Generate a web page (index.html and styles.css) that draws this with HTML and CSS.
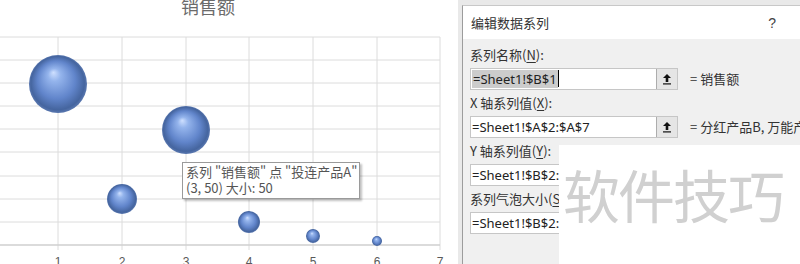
FILE: index.html
```html
<!DOCTYPE html>
<html lang="zh-CN">

<head>
    <meta charset="UTF-8">
    <meta name="viewport" content="width=device-width, initial-scale=1.0">
    <title>编辑数据系列</title>
    <link rel="stylesheet" href="styles.css">
</head>

<body>
    <div class="screen">
        <!-- 气泡图 -->
        <div class="chart">
            <svg class="plot" width="450" height="264" viewBox="0 0 450 264">
                <defs>
                    <radialGradient id="ball" cx="50%" cy="50%" r="50%" fx="42%" fy="30%">
                        <stop offset="0%" stop-color="#cfe0ff" />
                        <stop offset="22%" stop-color="#94b4ec" />
                        <stop offset="65%" stop-color="#6185cb" />
                        <stop offset="92%" stop-color="#45659f" />
                        <stop offset="100%" stop-color="#5a78b0" />
                    </radialGradient>
                </defs>
                <text class="title" x="208" y="14" text-anchor="middle">销售额</text>
                <g class="grid">
                    <line x1="0" y1="37" x2="440" y2="37" />
                    <line x1="0" y1="60" x2="440" y2="60" />
                    <line x1="0" y1="83" x2="440" y2="83" />
                    <line x1="0" y1="106" x2="440" y2="106" />
                    <line x1="0" y1="129" x2="440" y2="129" />
                    <line x1="0" y1="152" x2="440" y2="152" />
                    <line x1="0" y1="176" x2="440" y2="176" />
                    <line x1="0" y1="199" x2="440" y2="199" />
                    <line x1="0" y1="222" x2="440" y2="222" />
                    <line x1="58" y1="37" x2="58" y2="250" />
                    <line x1="122" y1="37" x2="122" y2="250" />
                    <line x1="186" y1="37" x2="186" y2="250" />
                    <line x1="249" y1="37" x2="249" y2="250" />
                    <line x1="313" y1="37" x2="313" y2="250" />
                    <line x1="377" y1="37" x2="377" y2="250" />
                    <line x1="440" y1="37" x2="440" y2="250" />
                </g>
                <line class="axis" x1="0" y1="245" x2="440" y2="245" />
                <g class="bubbles">
                    <circle cx="58" cy="84" r="29" />
                    <circle cx="186" cy="130" r="24" />
                    <circle cx="122" cy="199" r="15" />
                    <circle cx="249" cy="222" r="11" />
                    <circle cx="313" cy="236" r="7" />
                    <circle cx="377" cy="241" r="5" />
                </g>
                <g class="ticks">
                    <text x="58" y="266">1</text>
                    <text x="122" y="266">2</text>
                    <text x="186" y="266">3</text>
                    <text x="249" y="266">4</text>
                    <text x="313" y="266">5</text>
                    <text x="377" y="266">6</text>
                    <text x="440" y="266">7</text>
                </g>
            </svg>
            <div class="tooltip">
                <div>系列 "销售额" 点 "投连产品A"</div>
                <div>(3, 50) 大小: 50</div>
            </div>
        </div>

        <div class="gap"></div>

        <!-- 编辑数据系列 对话框 -->
        <div class="dialog">
            <div class="dlg-title">
                <span>编辑数据系列</span>
                <span class="help">?</span>
            </div>
            <div class="dlg-body">
                <div class="label">系列名称(<u>N</u>):</div>
                <div class="row">
                    <div class="ref">
                        <span class="ref-text"><span class="sel">=Sheet1!$B$1</span><span class="caret"></span></span>
                        <span class="pick"><svg width="10" height="12" viewBox="0 0 10 12"><path d="M5 1 L9 5 H6.3 V9 H3.7 V5 H1 Z" fill="#111" /><rect x="1" y="10.3" width="8" height="1.2" fill="#111" /></svg></span>
                    </div>
                    <div class="value">= 销售额</div>
                </div>
                <div class="label">X 轴系列值(<u>X</u>):</div>
                <div class="row">
                    <div class="ref">
                        <span class="ref-text">=Sheet1!$A$2:$A$7</span>
                        <span class="pick"><svg width="10" height="12" viewBox="0 0 10 12"><path d="M5 1 L9 5 H6.3 V9 H3.7 V5 H1 Z" fill="#111" /><rect x="1" y="10.3" width="8" height="1.2" fill="#111" /></svg></span>
                    </div>
                    <div class="value">= 分红产品B, 万能产品C, 投连产品A</div>
                </div>
                <div class="label">Y 轴系列值(<u>Y</u>):</div>
                <div class="row">
                    <div class="ref">
                        <span class="ref-text">=Sheet1!$B$2:$B$7</span>
                    </div>
                </div>
                <div class="label">系列气泡大小(<u>S</u>):</div>
                <div class="row">
                    <div class="ref">
                        <span class="ref-text">=Sheet1!$B$2:$B$7</span>
                    </div>
                </div>
            </div>
        </div>

        <div class="watermark">软件技巧</div>
    </div>
</body>

</html>
```

FILE: styles.css
```css
body {
    margin: 0;
    padding: 0;
    background-color: #ffffff;
    font-family: "Noto Sans CJK SC", "Noto Sans", sans-serif;
    color: #333;
}

.screen {
    position: relative;
    display: flex;
    width: 800px;
    height: 264px;
    overflow: hidden;
}

/* 图表 */
.chart {
    position: relative;
    width: 450px;
    height: 264px;
    flex-shrink: 0;
}

.plot {
    display: block;
}

.title {
    font-family: "Noto Sans CJK SC", sans-serif;
    font-size: 18px;
    fill: #6b6b6b;
}

.grid line {
    stroke: #dcdcdc;
    stroke-width: 1;
}

.axis {
    stroke: #cfcfcf;
    stroke-width: 1.5;
}

.bubbles circle {
    fill: url(#ball);
}

.ticks text {
    font-family: "Liberation Sans", sans-serif;
    font-size: 12px;
    fill: #595959;
    text-anchor: middle;
}

.tooltip {
    position: absolute;
    left: 182px;
    top: 162px;
    width: 170px;
    padding: 1px 3px 2px 3px;
    background-color: #ffffff;
    border: 1px solid #9a9a9a;
    box-shadow: 2px 2px 2px rgba(0, 0, 0, 0.25);
    font-size: 13px;
    line-height: 16px;
    color: #555;
    white-space: nowrap;
}

/* 分隔条 */
.gap {
    width: 8px;
    flex-shrink: 0;
    background-color: #ffffff;
    border-right: 4px solid #e9e9e9;
}

/* 对话框 */
.dialog {
    width: 337px;
    flex-shrink: 0;
    margin-top: 5px;
    background-color: #f0f0f0;
    border-left: 1px solid #9c9c9c;
    border-top: 1px solid #c8c8c8;
    box-shadow: 0 -5px 0 #e9e9e9;
}

.dlg-title {
    display: flex;
    justify-content: space-between;
    align-items: center;
    height: 33px;
    padding: 0 24px 0 8px;
    background-color: #ffffff;
    font-size: 13px;
    color: #333;
}

.help {
    font-family: "Liberation Sans", sans-serif;
    font-size: 14px;
    color: #444;
}

.dlg-body {
    padding: 4px 0 0 7px;
}

.label {
    height: 23px;
    line-height: 24px;
    font-size: 13px;
    color: #333;
    white-space: nowrap;
}

.label u {
    text-decoration-thickness: 1px;
    text-underline-offset: 2px;
}

.row {
    display: flex;
    align-items: center;
    height: 25px;
    white-space: nowrap;
}

.ref {
    display: flex;
    flex-shrink: 0;
    width: 208px;
    height: 22px;
    box-sizing: border-box;
    background-color: #ffffff;
    border: 1px solid #c6c6c6;
}

.ref-text {
    flex: 1;
    display: flex;
    align-items: center;
    padding-left: 1px;
    font-family: "Noto Sans", sans-serif;
    font-size: 13px;
    color: #222;
    white-space: nowrap;
    overflow: hidden;
}

.sel {
    background-color: #cccccc;
    line-height: 18px;
    padding: 0 1px;
}

.caret {
    display: inline-block;
    width: 1px;
    height: 17px;
    background-color: #000;
}

.pick {
    display: flex;
    align-items: center;
    justify-content: center;
    width: 20px;
    background-color: #e5e5e5;
    border-left: 1px solid #adadad;
}

.value {
    flex-shrink: 0;
    margin-left: 12px;
    font-size: 13px;
    color: #333;
    white-space: nowrap;
}

/* 水印 */
.watermark {
    position: absolute;
    left: 559px;
    top: 145px;
    width: 241px;
    height: 119px;
    box-sizing: border-box;
    padding: 8px 0 0 4px;
    background-color: #ffffff;
    font-family: "Noto Sans CJK SC", sans-serif;
    font-size: 57px;
    line-height: 80px;
    letter-spacing: -2px;
    color: #d0d0d0;
    white-space: nowrap;
}
```
